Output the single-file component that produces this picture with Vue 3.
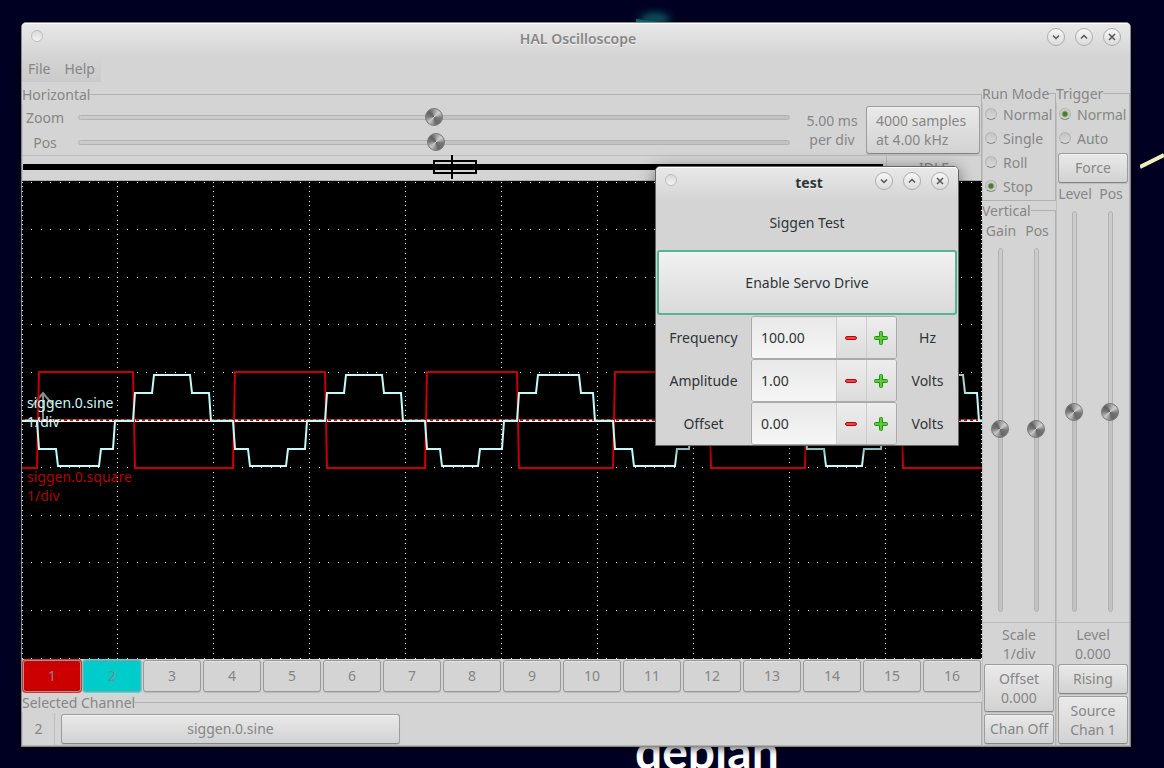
<script setup>
import { reactive, ref } from 'vue'

const runModes = ['Normal', 'Single', 'Roll', 'Stop']
const runMode = ref('Stop')
const triggerModes = ['Normal', 'Auto']
const triggerMode = ref('Normal')
const channels = Array.from({ length: 16 }, (_, i) => i + 1)

const sliders = reactive({
  zoom: 500,
  pos: 503,
  gain: 497,
  verticalPos: 497,
  level: 500,
  triggerPos: 500
})

const signal = reactive([
  { id: 'frequency', label: 'Frequency', value: '100.00', unit: 'Hz' },
  { id: 'amplitude', label: 'Amplitude', value: '1.00', unit: 'Volts' },
  { id: 'offset', label: 'Offset', value: '0.00', unit: 'Volts' }
])

function step(row, delta) {
  row.value = (Number(row.value) + delta).toFixed(2)
}

// Graticule: 10 x 10 divisions, each with 10 dots.
const spanX = 959
const spanY = 476
const dots = []
for (let d = 0; d <= 10; d++) {
  for (let i = 0; i <= 100; i++) {
    dots.push([Math.floor((spanX * d) / 10), 1 + Math.floor((spanY * i) / 100)])
    if (d !== 5) dots.push([Math.floor((spanX * i) / 100), 1 + Math.floor((spanY * d) / 10)])
  }
}
const gridPath = dots.map(([x, y]) => `M${x} ${y}h1v1h-1z`).join('')

const square = [
  [0, 287], [15, 287], [17, 191], [111, 191], [113, 287], [211, 287], [213, 191], [303, 191],
  [305, 287], [403, 287], [405, 191], [495, 191], [497, 287], [591, 287], [593, 191], [687, 191],
  [689, 287], [783, 287], [785, 191], [879, 191], [881, 287], [960, 287]
].join(' ')

const zero = 240
const mid = 28
const levels = [
  [15, 17, 34, 36, 77, 79, 91, 93, -1], [111, 113, 130, 132, 168, 170, 187, 189, 1],
  [211, 213, 226, 228, 264, 266, 283, 285, -1], [303, 305, 322, 324, 360, 362, 379, 381, 1],
  [403, 405, 418, 420, 456, 458, 480, 482, -1], [495, 497, 514, 516, 557, 559, 571, 573, 1],
  [591, 593, 610, 612, 653, 655, 667, 669, -1], [687, 689, 706, 708, 744, 746, 763, 765, 1],
  [783, 785, 802, 804, 840, 842, 859, 861, -1], [879, 881, 898, 900, 941, 943, 955, 957, 1]
]
const sine = [[0, zero]]
for (const [a, b, c, d, e, f, g, h, sign] of levels) {
  const m = zero - sign * mid
  const p = sign > 0 ? 194 : 285
  sine.push([a, zero], [b, m], [c, m], [d, p], [e, p], [f, m], [g, m], [h, zero])
}
sine.push([960, zero])
const sinePoints = sine.join(' ')
</script>

<template>
  <div class="desktop">
    <svg class="wallpaper swirl" width="60" height="24" viewBox="0 0 60 24" aria-hidden="true">
      <defs>
        <filter id="glow" x="-50%" y="-50%" width="200%" height="200%">
          <feGaussianBlur stdDeviation="4" />
        </filter>
      </defs>
      <ellipse cx="29" cy="20" rx="15" ry="7" fill="#0b5a66" filter="url(#glow)" />
      <path d="M10 19L34 22V24H10Z" fill="#07787a" />
    </svg>
    <svg class="wallpaper beam" width="24" height="22" viewBox="0 0 24 22" aria-hidden="true">
      <path d="M0 18L24 6" stroke="#eeeebb" stroke-width="4" />
    </svg>
    <div class="wallpaper brand">debian</div>

    <main class="window">
      <header class="titlebar">
        <span class="dot"></span>
        <h1 class="title">HAL Oscilloscope</h1>
        <div class="controls">
          <button type="button" class="round" aria-label="Minimize">
            <svg width="16" height="16" viewBox="0 0 16 16"><path d="M5 6.500L8 9.500L11 6.500" /></svg>
          </button>
          <button type="button" class="round" aria-label="Maximize">
            <svg width="16" height="16" viewBox="0 0 16 16"><path d="M5 9.500L8 6.500L11 9.500" /></svg>
          </button>
          <button type="button" class="round" aria-label="Close">
            <svg width="16" height="16" viewBox="0 0 16 16"><path d="M5 5L11 11M11 5L5 11" /></svg>
          </button>
        </div>
      </header>
      <nav class="menubar">
        <button type="button" class="menu">File</button>
        <button type="button" class="menu">Help</button>
      </nav>

      <div class="body">
        <div class="scope">
          <fieldset class="frame horizontal">
            <legend>Horizontal</legend>
            <div class="timebase">
              <div class="ranges">
                <label for="zoom">Zoom</label>
                <input id="zoom" v-model="sliders.zoom" type="range" min="0" max="1000" />
                <label for="pos">Pos</label>
                <input id="pos" v-model="sliders.pos" type="range" min="0" max="1000" />
              </div>
              <div class="perdiv">5.00 ms<br />per div</div>
              <button type="button" class="btn samples">4000 samples<br />at 4.00 kHz</button>
            </div>
            <div class="record">
              <svg class="strip" viewBox="0 0 860 24" preserveAspectRatio="none" aria-hidden="true">
                <rect x="0" y="8" width="860" height="6" />
                <rect x="411" y="5" width="42" height="12" fill="none" stroke="#000" stroke-width="2" />
                <rect x="428" y="-1" width="2" height="24" />
              </svg>
              <div class="state">IDLE</div>
            </div>
          </fieldset>

          <div class="display">
            <svg class="plot" viewBox="0 0 960 478" preserveAspectRatio="none" aria-hidden="true">
              <path :d="gridPath" fill="#fff" shape-rendering="crispEdges" />
              <path d="M21 240V212M11 224L21 212L31 224" fill="none" stroke="#8c8c8c" stroke-width="2" />
              <rect x="0" y="238" width="960" height="1" fill="#808080" />
              <rect x="0" y="239" width="960" height="2" fill="#fff" />
              <path d="M0 239H960" stroke="#c00" stroke-width="2" stroke-dasharray="3 3" />
              <polyline :points="square" fill="none" stroke="#c80000" stroke-width="2" />
              <polyline :points="sinePoints" fill="none" stroke="#c4fafa" stroke-width="2" />
            </svg>
            <div class="trace sine">siggen.0.sine<br />1/div</div>
            <div class="trace square">siggen.0.square<br />1/div</div>
          </div>

          <div class="channels">
            <button
              v-for="n in channels"
              :key="n"
              type="button"
              class="channel"
              :class="{ red: n === 1, cyan: n === 2 }"
            >{{ n }}</button>
          </div>

          <fieldset class="frame selected">
            <legend>Selected Channel</legend>
            <div class="selrow">
              <span class="number">2</span>
              <button type="button" class="btn source">siggen.0.sine</button>
            </div>
          </fieldset>
        </div>

        <div class="side">
          <fieldset class="frame run">
            <legend>Run Mode</legend>
            <label v-for="m in runModes" :key="m" class="radio">
              <input v-model="runMode" type="radio" name="run-mode" :value="m" />{{ m }}
            </label>
          </fieldset>
          <fieldset class="frame grow">
            <legend>Vertical</legend>
            <div class="pair">
              <label for="gain">Gain</label>
              <label for="vertical-pos">Pos</label>
            </div>
            <div class="uprights">
              <input id="gain" v-model="sliders.gain" class="upright" type="range" min="0" max="1000" />
              <input id="vertical-pos" v-model="sliders.verticalPos" class="upright" type="range" min="0" max="1000" />
            </div>
            <div class="readout">Scale<br />1/div</div>
            <button type="button" class="btn tall">Offset<br />0.000</button>
            <button type="button" class="btn">Chan Off</button>
          </fieldset>
        </div>

        <div class="side">
          <fieldset class="frame grow">
            <legend>Trigger</legend>
            <label v-for="m in triggerModes" :key="m" class="radio">
              <input v-model="triggerMode" type="radio" name="trigger-mode" :value="m" />{{ m }}
            </label>
            <button type="button" class="btn">Force</button>
            <div class="pair">
              <label for="level">Level</label>
              <label for="trigger-pos">Pos</label>
            </div>
            <div class="uprights">
              <input id="level" v-model="sliders.level" class="upright" type="range" min="0" max="1000" />
              <input id="trigger-pos" v-model="sliders.triggerPos" class="upright" type="range" min="0" max="1000" />
            </div>
            <div class="readout">Level<br />0.000</div>
            <button type="button" class="btn">Rising</button>
            <button type="button" class="btn tall">Source<br />Chan 1</button>
          </fieldset>
        </div>
      </div>
    </main>

    <section class="dialog">
      <header class="titlebar">
        <span class="dot"></span>
        <h2 class="title">test</h2>
        <div class="controls">
          <button type="button" class="round" aria-label="Minimize">
            <svg width="16" height="16" viewBox="0 0 16 16"><path d="M5 6.500L8 9.500L11 6.500" /></svg>
          </button>
          <button type="button" class="round" aria-label="Maximize">
            <svg width="16" height="16" viewBox="0 0 16 16"><path d="M5 9.500L8 6.500L11 9.500" /></svg>
          </button>
          <button type="button" class="round" aria-label="Close">
            <svg width="16" height="16" viewBox="0 0 16 16"><path d="M5 5L11 11M11 5L5 11" /></svg>
          </button>
        </div>
      </header>
      <p class="heading">Siggen Test</p>
      <button type="button" class="enable">Enable Servo Drive</button>
      <div v-for="row in signal" :key="row.id" class="setting">
        <label :for="row.id">{{ row.label }}</label>
        <div class="spin">
          <input :id="row.id" v-model="row.value" type="text" />
          <button type="button" :aria-label="'Decrease ' + row.label" @click="step(row, -1)">
            <svg width="16" height="16" viewBox="0 0 16 16">
              <rect x="2.500" y="6.500" width="11" height="3" rx="1.500" fill="#e04a4a" stroke="#c4000c" />
            </svg>
          </button>
          <button type="button" :aria-label="'Increase ' + row.label" @click="step(row, 1)">
            <svg width="16" height="16" viewBox="0 0 16 16">
              <path
                d="M7.500 1.500h1a1 1 0 0 1 1 1v4h4a1 1 0 0 1 1 1v1a1 1 0 0 1-1 1h-4v4a1 1 0 0 1-1 1h-1a1 1 0 0 1-1-1v-4h-4a1 1 0 0 1-1-1v-1a1 1 0 0 1 1-1h4v-4a1 1 0 0 1 1-1z"
                fill="#5cc83a"
                stroke="#1c9410"
              />
            </svg>
          </button>
        </div>
        <span class="unit">{{ row.unit }}</span>
      </div>
    </section>
  </div>
</template>

<style>
body {
  margin: 0;
  background: #000022;
}
</style>

<style scoped>
.desktop {
  position: relative;
  display: flex;
  height: 100vh;
  min-height: 640px;
  box-sizing: border-box;
  padding: 22px 33px 21px 21px;
  overflow: hidden;
  background: #000022;
  color: #868686;
  font: 14px/19px "Noto Sans", "Open Sans", sans-serif;
}
.desktop * {
  box-sizing: border-box;
}
button,
input {
  margin: 0;
  padding: 0;
  color: inherit;
  font: inherit;
}
.wallpaper {
  position: absolute;
}
.swirl {
  left: 626px;
  top: 0;
}
.beam {
  right: 0;
  top: 149px;
}
.brand {
  left: 635px;
  bottom: -10px;
  color: #fff;
  font: bold 48px/54px Lato, "Noto Sans", sans-serif;
}
.window {
  position: relative;
  display: flex;
  flex: 1;
  flex-direction: column;
  min-width: 0;
  border: 1px solid #8a8a8a;
  border-radius: 5px 5px 0 0;
  background: #d4d4d4;
  box-shadow: 0 2px 8px rgba(0, 0, 0, 0.6);
}
.titlebar {
  display: grid;
  grid-template-columns: 1fr auto 1fr;
  flex: none;
  height: 34px;
  padding: 4px 9px 0;
  border-top: 1px solid #fff;
  border-radius: 4px 4px 0 0;
  background: linear-gradient(#e8e8e8, #d4d4d4);
}
.dot {
  width: 12px;
  height: 12px;
  margin-top: 2px;
  border: 1px solid #bdbdbd;
  border-radius: 50%;
  background: linear-gradient(#d8d8d8, #f4f4f4);
}
.title {
  margin: 1px 0 0;
  padding-left: 4px;
  color: #868686;
  font-size: 14px;
  font-weight: 600;
  line-height: 19px;
  text-shadow: 0 1px #f4f4f4;
}
.controls {
  display: flex;
  gap: 10px;
  justify-content: flex-end;
}
.round {
  width: 18px;
  height: 18px;
  border: 1px solid #acacac;
  border-radius: 50%;
  background: linear-gradient(#f6f6f6, #dcdcdc);
}
.round svg {
  display: block;
  fill: none;
  stroke: #555;
  stroke-width: 1.5;
}
.menubar {
  display: flex;
  flex: none;
  gap: 2px;
  align-self: flex-start;
  height: 25px;
  margin-bottom: 2px;
  background: linear-gradient(#d4d4d4, #cacaca);
}
.menu {
  padding: 0 6px 2px;
  border: 0;
  background: none;
}
.body {
  display: flex;
  flex: 1;
  min-height: 0;
}
.scope {
  display: flex;
  flex: 1;
  flex-direction: column;
  min-width: 0;
  padding-top: 1px;
}
.side {
  display: flex;
  flex: none;
  flex-direction: column;
  width: 74px;
}
.frame {
  min-width: 0;
  margin: 0;
  padding: 0;
  border: 1px solid #b0b0b0;
  border-left-color: #c0c0c0;
}
.frame legend {
  margin-left: -1px;
  padding: 0;
}
.grow {
  display: flex;
  flex: 1;
  flex-direction: column;
  min-height: 0;
}
.btn {
  display: block;
  flex: none;
  height: 30px;
  margin: 1px;
  padding-bottom: 2px;
  border: 1px solid #9c9c9c;
  border-bottom-color: #858585;
  border-radius: 3px;
  background: linear-gradient(#e9e9e9, #d2d2d2);
  box-shadow: inset 0 1px #f2f2f2, 0 1px 1px #bcbcbc;
  white-space: nowrap;
}
.tall {
  height: 48px;
  padding-bottom: 0;
}
.timebase {
  display: flex;
  align-items: center;
  padding-top: 1px;
}
.ranges {
  display: grid;
  flex: 1;
  grid-template-columns: 44px 1fr;
  grid-auto-rows: 25px;
  align-items: center;
  column-gap: 11px;
  text-align: center;
}
.perdiv {
  width: 75px;
  padding-left: 9px;
  text-align: center;
}
.samples {
  width: 114px;
  height: 48px;
  padding: 0 9px;
  text-align: left;
}
input[type="range"] {
  appearance: none;
  width: 100%;
  height: 18px;
  background: none;
}
input[type="range"]::-webkit-slider-runnable-track {
  height: 5px;
  border: 1px solid #b2b2b2;
  border-radius: 3px;
  background: linear-gradient(to right, #cbcbcb 50%, #c2c2c2 50%);
}
input[type="range"]::-webkit-slider-thumb {
  appearance: none;
  width: 18px;
  height: 18px;
  margin-top: -8px;
  border: 1px solid #777;
  border-radius: 50%;
  background: conic-gradient(#999, #d0d0d0 50deg, #777 100deg, #666 160deg, #c8c8c8 225deg, #777 275deg, #606060 320deg, #999);
}
.uprights {
  display: flex;
  flex: 1 1 0;
  justify-content: space-around;
  min-height: 0;
  padding: 8px 1px 10px 0;
  border-bottom: 1px solid #bcbcbc;
}
input.upright {
  width: 18px;
  height: auto;
  min-height: 0;
  writing-mode: vertical-lr;
}
input.upright::-webkit-slider-runnable-track {
  width: 5px;
  height: auto;
  background: linear-gradient(#cbcbcb 50%, #c2c2c2 50%);
}
input.upright::-webkit-slider-thumb {
  margin-top: 0;
  margin-right: -7px;
  margin-left: -8px;
}
.record {
  display: flex;
  height: 25px;
  border-top: 1px solid #bcbcbc;
}
.strip {
  flex: 1;
  min-width: 0;
  height: 24px;
  margin-right: 3px;
  overflow: visible;
}
.state {
  width: 95px;
  border-left: 1px solid #bcbcbc;
  line-height: 24px;
  text-align: center;
}
.display {
  position: relative;
  flex: 1 1 0;
  min-height: 240px;
  background: #000;
}
.plot {
  position: absolute;
  width: 100%;
  height: 100%;
}
.trace {
  position: absolute;
  left: 5px;
}
.trace.sine {
  top: calc(50% - 27px);
  color: #c4fafa;
}
.trace.square {
  top: calc(50% + 47px);
  color: #b40000;
}
.channels {
  display: flex;
  flex: none;
  gap: 2px;
  padding: 1px;
}
.channel {
  flex: 1;
  min-width: 0;
  height: 32px;
  padding-bottom: 2px;
  border: 1px solid #999;
  border-radius: 3px;
  background: #d4d4d4;
  box-shadow: inset 0 1px #e2e2e2, 0 1px 1px #bcbcbc;
}
.channel.red {
  background: #c00;
  box-shadow: 0 0 0 1px #e03030;
}
.channel.cyan {
  background: #00cccc;
  box-shadow: 0 0 0 1px #40dede;
}
.selrow {
  display: flex;
  padding-top: 1px;
}
.number {
  width: 32px;
  border-right: 1px solid #bcbcbc;
  line-height: 32px;
  text-align: center;
}
.source {
  width: 339px;
  margin-left: 6px;
}
.run {
  flex: none;
  padding-bottom: 1px;
}
.radio {
  display: flex;
  flex: none;
  gap: 6px;
  align-items: center;
  height: 24px;
  padding: 0 0 2px 2px;
  white-space: nowrap;
}
.radio + .btn {
  margin-top: 2px;
}
.radio input {
  appearance: none;
  flex: none;
  width: 12px;
  height: 12px;
  border: 1px solid #b4b4b4;
  border-bottom-color: #888;
  border-radius: 50%;
  background: linear-gradient(#c4c4c4, #d8d8d8);
}
.radio input:checked {
  background: radial-gradient(circle, #4d7d2c 0 2px, #a5b598 3px, #d0d0d0 4px);
}
.pair {
  display: flex;
  flex: none;
  justify-content: space-around;
}
legend + .pair {
  padding-top: 1px;
}
.pair label {
  flex: 1;
  text-align: center;
}
.readout {
  flex: none;
  padding: 2px 0 0;
  text-align: center;
}
.dialog {
  position: absolute;
  left: 655px;
  top: 166px;
  width: 304px;
  border: 1px solid #666;
  border-radius: 5px 5px 0 0;
  background: #d4d4d4;
  box-shadow: 0 3px 16px rgba(0, 0, 0, 0.5);
  color: #2e3436;
}
.dialog .title {
  color: #2e3436;
  font-weight: bold;
}
.heading {
  margin: 0;
  padding: 12px 0 18px;
  text-align: center;
}
.enable {
  display: block;
  width: calc(100% - 2px);
  height: 65px;
  margin: 0 1px 1px;
  border: 2px solid #54b494;
  border-radius: 3px;
  background: linear-gradient(#f2f2f2, #dadada);
}
.setting {
  display: grid;
  grid-template-columns: 95px 1fr 61px;
  align-items: center;
  height: 43px;
  text-align: center;
}
.spin {
  display: flex;
  height: 43px;
  overflow: hidden;
  border: 1px solid #aaa;
  border-radius: 3px;
  background: #e4e4e4;
}
.spin input {
  flex: 1;
  min-width: 0;
  padding: 0 9px;
  border: 0;
  background: linear-gradient(#e8e8e8, #f6f6f6);
}
.spin button {
  display: grid;
  place-items: center;
  width: 30px;
  padding-right: 2px;
  border: 0;
  border-left: 1px solid #ccc;
  background: linear-gradient(#ededed, #dcdcdc);
}
</style>
